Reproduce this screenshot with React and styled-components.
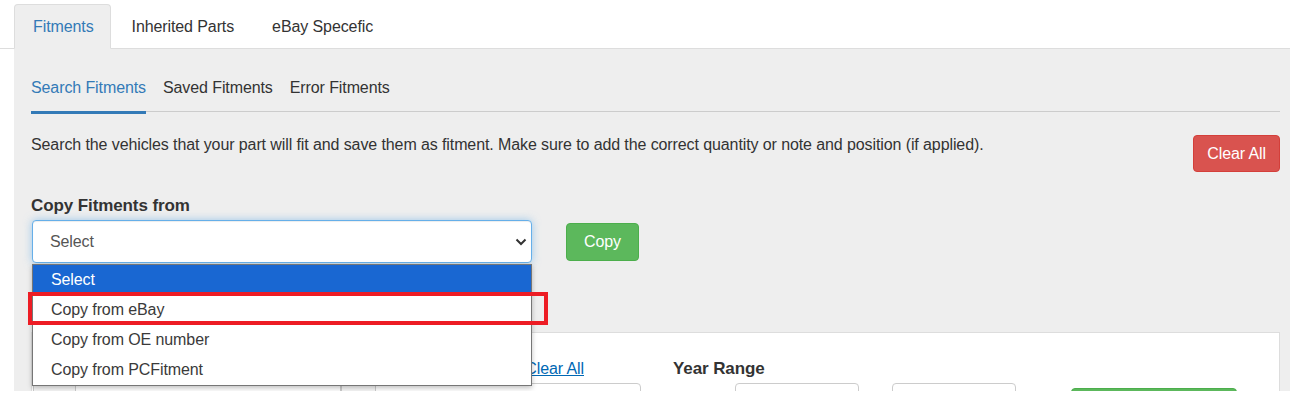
import React from "react";
import styled, { createGlobalStyle } from "styled-components";

const Global = createGlobalStyle`
  html, body {
    margin: 0;
    padding: 0;
    background: #fff;
  }
  body {
    font-family: "Liberation Sans", Arial, sans-serif;
    font-size: 16px;
    letter-spacing: -0.1px;
    color: #333;
  }
`;

const Page = styled.div`
  height: 391px;
  overflow: hidden;
`;

const TabBar = styled.div`
  display: flex;
  padding: 4px 0 0 14px;
  border-bottom: 1px solid #ddd;
`;

const Tab = styled.div`
  height: 43px;
  line-height: 43px;
  padding: 0 16px 0 18px;
  margin-right: 2px;
  margin-bottom: -1px;
  border: 1px solid ${(p) => (p.$active ? "#ddd" : "transparent")};
  border-bottom-color: transparent;
  border-radius: 4px 4px 0 0;
  background: ${(p) => (p.$active ? "#eee" : "transparent")};
  color: ${(p) => (p.$active ? "#337ab7" : "#333")};
`;

const Panel = styled.div`
  margin-left: 14px;
  padding: 15px 10px 0 17px;
  background: #eee;
  height: 400px;
`;

const SubNav = styled.div`
  display: flex;
  gap: 17px;
  border-bottom: 1px solid #ccc;
`;

const SubTab = styled.div`
  position: relative;
  height: 47px;
  line-height: 47px;
  color: ${(p) => (p.$active ? "#337ab7" : "#333")};
  &::after {
    content: "";
    display: ${(p) => (p.$active ? "block" : "none")};
    position: absolute;
    left: 0;
    right: 0;
    bottom: -3px;
    height: 3px;
    background: #337ab7;
  }
`;

const InfoRow = styled.div`
  display: flex;
  justify-content: space-between;
  align-items: flex-start;
  margin-top: 23px;
`;

const Info = styled.p`
  margin: 0;
  line-height: 20px;
`;

const Button = styled.button`
  font-family: inherit;
  font-size: 16px;
  letter-spacing: -0.1px;
  color: #fff;
  border: 1px solid ${(p) => (p.$kind === "danger" ? "#d43f3a" : "#4cae4c")};
  background: ${(p) => (p.$kind === "danger" ? "#d9534f" : "#5cb85c")};
  border-radius: 4px;
  height: ${(p) => p.$h || 37}px;
  width: ${(p) => (p.$w ? `${p.$w}px` : "auto")};
  padding: 0 ${(p) => p.$px ?? 14}px;
  cursor: pointer;
`;

const FieldLabel = styled.div`
  font-weight: bold;
  font-size: 17px;
  line-height: 20px;
  margin-top: 24px;
  margin-bottom: 4px;
`;

const CopyRow = styled.div`
  display: flex;
  align-items: center;
  gap: 34px;
`;

const SelectWrap = styled.div`
  position: relative;
  width: 500px;
  margin-left: 1px;
`;

const SelectBox = styled.div`
  display: flex;
  align-items: center;
  justify-content: space-between;
  height: 43px;
  box-sizing: border-box;
  padding: 0 4px 0 17px;
  background: #fff;
  border: 1px solid #66afe9;
  border-radius: 4px;
  color: #555;
  box-shadow: inset 0 1px 1px rgba(0, 0, 0, 0.075),
    0 0 8px rgba(102, 175, 233, 0.6);
`;

const OptionList = styled.div`
  position: absolute;
  z-index: 5;
  top: 44px;
  left: 0;
  width: 500px;
  box-sizing: border-box;
  background: #fff;
  border: 1px solid #767676;
  box-shadow: 0 2px 5px rgba(0, 0, 0, 0.25);
`;

const Option = styled.div`
  height: 30px;
  line-height: 30px;
  padding-left: 18px;
  background: ${(p) => (p.$selected ? "#1967d2" : "#fff")};
  color: ${(p) => (p.$selected ? "#fff" : "#3a3a3a")};
`;

const Highlight = styled.div`
  position: absolute;
  top: 27px;
  left: -5px;
  width: 520px;
  height: 33px;
  box-sizing: border-box;
  border: 4px solid #ed1c24;
`;

const Card = styled.div`
  margin-top: 69px;
  background: #fff;
  border: 1px solid #ddd;
  padding: 26px 0 0 1px;
  display: flex;
  align-items: flex-start;
`;

const VehicleCol = styled.div`
  width: 608px;
`;

const LabelRow = styled.div`
  display: flex;
  justify-content: ${(p) => (p.$end ? "flex-end" : "flex-start")};
  width: ${(p) => (p.$w ? `${p.$w}px` : "auto")};
  line-height: 20px;
  margin-bottom: 4px;
`;

const Strong = styled.span`
  font-weight: bold;
  font-size: 17px;
`;

const Link = styled.a`
  color: #0068b4;
  text-decoration: underline;
`;

const InputGroup = styled.div`
  display: flex;
  height: 34px;
`;

const Addon = styled.div`
  width: ${(p) => p.$w}px;
  box-sizing: border-box;
  border: 1px solid #ccc;
  border-right: none;
  background: #f7f7f7;
  border-radius: ${(p) => (p.$first ? "4px 0 0 4px" : "0")};
`;

const Input = styled.div`
  flex: ${(p) => (p.$w ? "none" : 1)};
  width: ${(p) => (p.$w ? `${p.$w}px` : "auto")};
  height: 34px;
  box-sizing: border-box;
  border: 1px solid #ccc;
  border-radius: ${(p) => p.$r || "4px"};
  background: #fff;
`;

const YearCol = styled.div`
  margin-left: 32px;
`;

const YearInputs = styled.div`
  display: flex;
  align-items: center;
`;

const Spacer = styled.div`
  width: ${(p) => p.$w}px;
`;

const AddButtonWrap = styled.div`
  margin-left: 55px;
  padding-top: 29px;
`;

const Chevron = () => (
  <svg width="12" height="8" viewBox="0 0 12 8">
    <polyline
      points="1.5,1.5 6,6 10.5,1.5"
      fill="none"
      stroke="#333"
      strokeWidth="2"
    />
  </svg>
);

export default function App() {
  return (
    <Page>
      <Global />
      <TabBar>
        <Tab $active>Fitments</Tab>
        <Tab>Inherited Parts</Tab>
        <Tab>eBay Specefic</Tab>
      </TabBar>
      <Panel>
        <SubNav>
          <SubTab $active>Search Fitments</SubTab>
          <SubTab>Saved Fitments</SubTab>
          <SubTab>Error Fitments</SubTab>
        </SubNav>

        <InfoRow>
          <Info>
            Search the vehicles that your part will fit and save them as
            fitment. Make sure to add the correct quantity or note and position
            (if applied).
          </Info>
          <Button $kind="danger" $h={37} $px={13}>
            Clear All
          </Button>
        </InfoRow>

        <FieldLabel>Copy Fitments from</FieldLabel>
        <CopyRow>
          <SelectWrap>
            <SelectBox>
              <span>Select</span>
              <Chevron />
            </SelectBox>
            <OptionList>
              <Option $selected>Select</Option>
              <Option>Copy from eBay</Option>
              <Option>Copy from OE number</Option>
              <Option>Copy from PCFitment</Option>
              <Highlight />
            </OptionList>
          </SelectWrap>
          <Button $h={38} $w={73} $px={0}>
            Copy
          </Button>
        </CopyRow>

        <Card>
          <VehicleCol>
            <LabelRow $end $w={551}>
              <Link>Clear All</Link>
            </LabelRow>
            <InputGroup>
              <Addon $w={42} $first />
              <Input $r="0" />
              <Addon $w={34} />
              <Input $r="0 4px 4px 0" />
            </InputGroup>
          </VehicleCol>
          <YearCol>
            <LabelRow>
              <Strong>Year Range</Strong>
            </LabelRow>
            <YearInputs>
              <Spacer $w={62} />
              <Input $w={124} />
              <Spacer $w={33} />
              <Input $w={124} />
            </YearInputs>
          </YearCol>
          <AddButtonWrap>
            <Button $h={36} $w={166} $px={0} aria-label="Add Fitment" />
          </AddButtonWrap>
        </Card>
      </Panel>
    </Page>
  );
}
